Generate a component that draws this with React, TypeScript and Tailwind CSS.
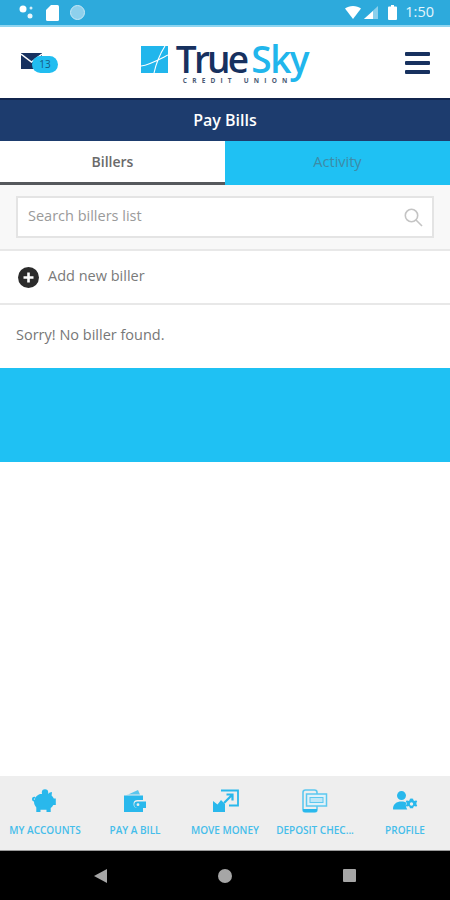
import React from "react";

const F = "font-['Open_Sans','Noto_Sans',sans-serif]";

function Piggy() {
  return (
    <svg width="28" height="24" viewBox="0 0 28 24" fill="#29b8ec">
      <path d="M1 10c0-1.500 1.200-2.300 2.300-2.300.8 0 1.200.6 1 1.200-.3.7-1.300.4-1.500 1.100-.1.500.3.800.9.800.400-2.800 2.500-5 5.300-5.900h8c1.300-1.200 2.700-1.800 4-1.900l-.4 3.400c1 .9 1.800 2 2.200 3.100h2v6.500h-2.500c-.6 1.200-1.500 2.200-2.600 3V23h-4.200v-2.200h-6V23H5.300v-4.600C3.800 16.900 3 15 3 12.600 1.800 12.300 1 11.300 1 10z" />
      <circle cx="14" cy="3.500" r="3.200" />
    </svg>
  );
}
function Wallet() {
  return (
    <svg width="24" height="24" viewBox="0 0 24 24" fill="#29b8ec">
      <path d="M3 6.500 15 1l2 4.500H6z" opacity=".75" />
      <path d="M1 7.500h19v4.500h-5.500a4 4 0 0 0 0 8H20V24H1z" transform="translate(0 -1)" />
      <path d="M14.500 12.500H23v6.500h-8.500a3.250 3.250 0 0 1 0-6.500z" />
      <circle cx="15" cy="15.700" r="1.400" fill="#eeeeee" />
    </svg>
  );
}
function Move() {
  return (
    <svg width="27" height="24" viewBox="0 0 27 24" fill="none">
      <path d="M1 12l4.500 3.500L9 11l4 4v8H1z" fill="#29b8ec" />
      <path d="M9 1.500h17v15h-9" stroke="#29b8ec" strokeWidth="1.800" />
      <path d="M12 14l8-8M14.500 5.500H20.500V11.500" stroke="#29b8ec" strokeWidth="2.200" />
    </svg>
  );
}
function Deposit() {
  return (
    <svg width="26" height="24" viewBox="0 0 26 24" fill="none" stroke="#5cc8ef">
      <rect x="1" y="1" width="14" height="22" rx="2.500" strokeWidth="1.600" />
      <rect x="4.500" y="5" width="20" height="12" fill="#dff1f9" strokeWidth="1.500" />
      <rect x="8" y="8.500" width="13" height="5" fill="#bfe7f7" strokeWidth="1" />
      <path d="M1 20h14v1.500a1.500 1.500 0 0 1-1.500 1.500h-11A1.500 1.500 0 0 1 1 21.500z" fill="#29b8ec" stroke="none" />
    </svg>
  );
}
function Profile() {
  return (
    <svg width="25" height="20" viewBox="0 0 25 20" fill="#29b8ec">
      <circle cx="8.500" cy="4.600" r="4.500" />
      <path d="M0 18c0-5 3.500-7.500 8.500-7.500 2 0 3.500.4 4.800 1.100-.8 2-.5 4.700 1 6.900H1.500C.5 18.500 0 18.500 0 18z" />
      <path fillRule="evenodd" d="M18.500 7.500l1.600.3.300 1.500 1.400.7 1.300-.7 1.100 1.300-.8 1.200v1.500l.8 1.200-1.100 1.300-1.300-.7-1.400.7-.3 1.500h-3.200l-.3-1.500-1.400-.7-1.300.7-1.100-1.300.8-1.200v-1.500l-.8-1.200 1.100-1.300 1.300.7 1.400-.7.300-1.500zm0 3.800a1.700 1.700 0 1 0 0 3.400 1.700 1.700 0 0 0 0-3.400z" />
    </svg>
  );
}

function NavItem({ icon, label }: { icon: React.ReactNode; label: string }) {
  return (
    <div className="flex w-[90px] flex-col items-center">
      <div className="flex h-[26px] items-center justify-center">{icon}</div>
      <span className="mt-[9px] whitespace-nowrap text-[10px] leading-[14px] font-semibold text-[#45bdea]">{label}</span>
    </div>
  );
}

export default function App() {
  return (
    <div className={`flex h-[900px] w-[450px] flex-col overflow-hidden bg-white ${F}`}>
      {/* status bar */}
      <div className="box-content flex h-[25px] shrink-0 items-center justify-between border-b-[2px] border-[#8fd5f0] bg-[#2daadc] pr-[16px] pl-[19px]">
        <div className="flex items-center">
          <svg width="17" height="15" viewBox="0 0 17 15" fill="#fff">
            <circle cx="4" cy="4" r="3.500" />
            <circle cx="12" cy="3" r="1.500" opacity=".8" />
            <circle cx="11" cy="11" r="2.500" opacity=".9" />
          </svg>
          <svg width="13" height="16" viewBox="0 0 13 16" fill="#fff" className="ml-[10px]">
            <path d="M5 0h6.500A1.500 1.500 0 0 1 13 1.500v13a1.500 1.500 0 0 1-1.500 1.500h-10A1.500 1.500 0 0 1 0 14.500V5z" />
          </svg>
          <div className="ml-[11px] h-[15px] w-[15px] rounded-full border border-[#c9e8f5] bg-[#8ed0ec]" />
        </div>
        <div className="flex items-center">
          <svg width="16" height="13" viewBox="0 0 16 13" fill="#fff"><path d="M0 2.500C2 .9 5 0 8 0s6 .9 8 2.500L8 13z" /></svg>
          <svg width="15" height="13" viewBox="0 0 15 13" className="ml-[3px]"><path d="M14 0v13H0z" fill="#fff" opacity=".45" /><path d="M9 5v8H0z" fill="#fff" /></svg>
          <svg width="9" height="15" viewBox="0 0 9 15" fill="#fff" className="ml-[9px]"><path d="M3 0h3v1.500h2a1 1 0 0 1 1 1V14a1 1 0 0 1-1 1H1a1 1 0 0 1-1-1V2.500a1 1 0 0 1 1-1h2z" /></svg>
          <span className="ml-[8px] text-[14.500px] leading-none font-medium text-[#e6f6fc]">1:50</span>
        </div>
      </div>

      {/* header */}
      <div className="flex h-[71px] shrink-0 items-center justify-between pr-[20px] pl-[21px]">
        <div className="relative mt-[1px] h-[20px] w-[37px]">
          <svg width="21" height="16" viewBox="0 0 21 16"><path d="M0 0h21v16H0z" fill="#17315f" /><path d="M0 1l10.500 8L21 1" fill="none" stroke="#fff" strokeWidth="1.500" /></svg>
          <div className="absolute top-[3px] left-[11px] flex h-[17px] w-[26px] items-center justify-center rounded-full bg-[#21bdf0] text-[10px] text-[#155a80]">13</div>
        </div>
        <div className="mt-[4px] mr-[14px] flex flex-col items-start">
          <div className="flex items-center">
            <svg width="27" height="27" viewBox="0 0 27 27" className="mr-[8px]">
              <path d="M0 0h27v27H0z" fill="#21b6ec" />
              <path d="M0 20C8 19 17 14 27 9M13 27C15 18 19 8 24 0" stroke="#fff" strokeWidth="1.100" fill="none" />
            </svg>
            <div className="flex items-baseline text-[37px] leading-[30px] font-semibold tracking-[-1.500px]">
              <span className="tracking-[-2.800px] text-[#17315f]">True</span>
              <span className="ml-[5px] text-[#21b6ec]">Sky</span>
            </div>
          </div>
          <div className="mt-[3px] ml-[42px] text-[6.500px] leading-[8px] font-bold tracking-[5.200px] text-[#4a5a75]">CREDIT UNION</div>
        </div>
        <div className="flex w-[25px] flex-col gap-[5px]">
          <div className="h-[4px] rounded-[1px] bg-[#17315f]" />
          <div className="h-[4px] rounded-[1px] bg-[#17315f]" />
          <div className="h-[4px] rounded-[1px] bg-[#17315f]" />
        </div>
      </div>

      {/* title */}
      <div className="box-content flex h-[41px] shrink-0 items-center justify-center border-t-[2px] border-[#11254d] bg-[#1d3c6e] text-[16px] font-semibold text-white">
        <span className="-mt-[2px]">Pay Bills</span>
      </div>

      {/* tabs */}
      <div className="flex h-[44px] shrink-0">
        <div className="flex flex-1 items-center justify-center border-b-[3px] border-[#55585c] bg-white pb-[1px] text-[14px] font-semibold text-[#6a6a6a]">Billers</div>
        <div className="flex flex-1 items-center justify-center bg-[#1fc1f3] pb-[3px] text-[14.500px] text-[#3d8ba6]">Activity</div>
      </div>

      {/* search */}
      <div className="flex h-[64px] shrink-0 items-center bg-[#f8f8f8] px-[16px]">
        <div className="flex h-[42px] w-full items-center justify-between border-2 border-[#e4e4e4] bg-white pr-[9px] pl-[10px]">
          <span className="-mt-[2px] text-[14.500px] text-[#9a9a9a]">Search billers list</span>
          <svg width="19" height="19" viewBox="0 0 19 19" fill="none" stroke="#c4c4c4" strokeWidth="1.600"><circle cx="7.500" cy="7.500" r="6.200" /><path d="M12 12l6 6" /></svg>
        </div>
      </div>

      {/* add */}
      <div className="flex h-[56px] shrink-0 items-center gap-[9px] border-y-2 border-[#e8e8e8] bg-white pl-[18px]">
        <svg width="21" height="21" viewBox="0 0 21 21">
          <circle cx="10.500" cy="10.500" r="10.500" fill="#2b2b2b" />
          <path d="M10.500 5.500v10M5.500 10.500h10" stroke="#fff" strokeWidth="2.600" />
        </svg>
        <span className="-mt-[2px] text-[14.500px] text-[#7a7a7a]">Add new biller</span>
      </div>

      {/* empty */}
      <div className="flex h-[63px] shrink-0 items-center pb-[4px] pl-[16px] text-[14.500px] text-[#777777]">Sorry! No biller found.</div>
      <div className="h-[94px] shrink-0 bg-[#1fc1f3]" />
      <div className="flex-1 bg-white" />

      {/* bottom nav */}
      <div className="flex h-[75px] shrink-0 border-b-[1px] border-[#9a9a9a] bg-[#eeeeee] pt-[12px]">
        <NavItem icon={<Piggy />} label="MY ACCOUNTS" />
        <NavItem icon={<Wallet />} label="PAY A BILL" />
        <NavItem icon={<Move />} label="MOVE MONEY" />
        <NavItem icon={<Deposit />} label="DEPOSIT CHEC..." />
        <NavItem icon={<Profile />} label="PROFILE" />
      </div>

      {/* android nav */}
      <div className="flex h-[49px] shrink-0 items-center justify-center gap-[111px] bg-black">
        <svg width="13" height="14" viewBox="0 0 13 14" fill="#a6a6a6"><path d="M13 0v14L0 7z" /></svg>
        <div className="h-[14px] w-[14px] rounded-full bg-[#a6a6a6]" />
        <div className="h-[13px] w-[13px] rounded-[1px] bg-[#a6a6a6]" />
      </div>
    </div>
  );
}
